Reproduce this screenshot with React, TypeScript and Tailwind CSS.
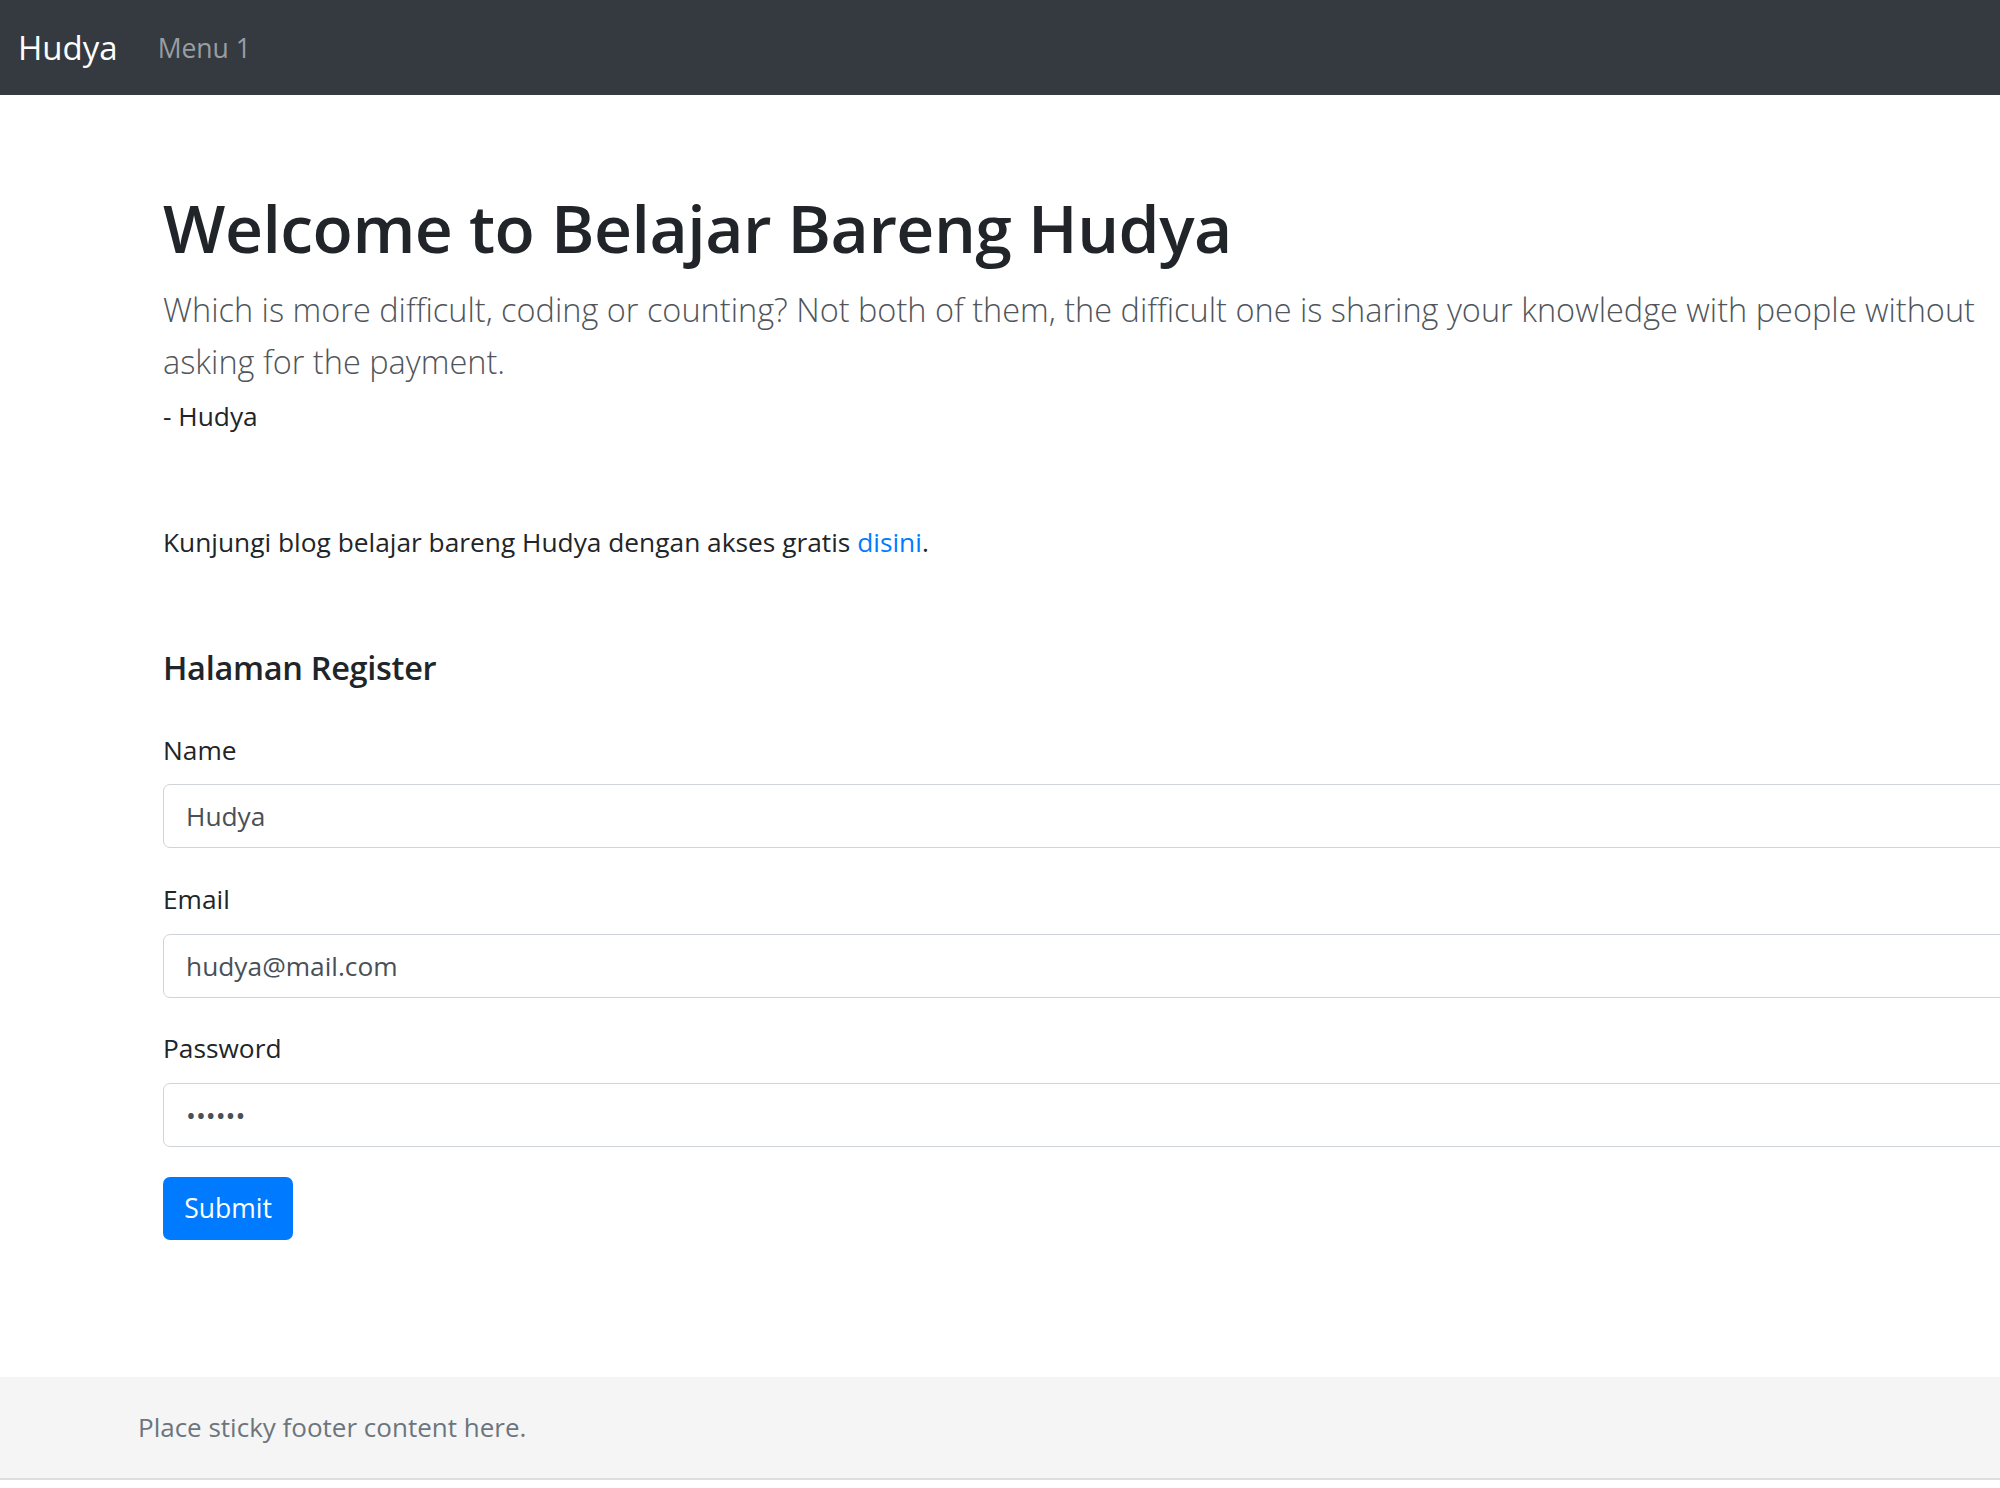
import React from "react";

export default function App() {
  return (
    <div
      className="w-[2000px] h-[1488px] overflow-hidden flex flex-col bg-white text-[#212529]"
      style={{ fontFamily: '"Open Sans", "Noto Sans", sans-serif' }}
    >
      <nav className="h-[95px] shrink-0 bg-[#343a40] flex items-center pl-[18px]">
        <span className="text-[33px] leading-none text-white mr-[40px]">Hudya</span>
        <span className="mt-[2px] text-[26.5px] leading-none text-[#9a9da0]">Menu 1</span>
      </nav>

      <main className="flex-1 pl-[163px]">
        <div className="w-[1880px]">
          <h1 className="mt-[92px] text-[66px] leading-[80px] font-semibold tracking-[-0.5px]">
            Welcome to Belajar Bareng Hudya
          </h1>
          <p className="mt-[17px] text-[32.5px] leading-[52px] font-light text-[#50555b]">
            Which is more difficult, coding or counting? Not both of them, the difficult one is sharing your knowledge with people without asking for the payment.
          </p>
          <p className="mt-[8px] text-[26.3px] leading-[40px]">- Hudya</p>

          <p className="mt-[86px] text-[26.3px] leading-[40px]">
            Kunjungi blog belajar bareng Hudya dengan akses gratis{" "}
            <a href="#" className="text-[#007bff]">disini</a>.
          </p>

          <h5 className="mt-[86px] text-[32.5px] leading-[40px] font-semibold tracking-[-0.3px]">Halaman Register</h5>

          <form className="mt-[42px] flex flex-col" onSubmit={(e) => e.preventDefault()}>
            <label className="text-[26.3px] leading-[40px]">Name</label>
            <input
              readOnly
              value="Hudya"
              className="mt-[14px] h-[64px] w-full rounded-[7px] border border-[#ced4da] px-[22px] text-[26.3px] text-[#495057] outline-none"
            />
            <label className="mt-[31px] text-[26.3px] leading-[40px]">Email</label>
            <input
              readOnly
              value="hudya@mail.com"
              className="mt-[15px] h-[64px] w-full rounded-[7px] border border-[#ced4da] px-[22px] text-[26.3px] text-[#495057] outline-none"
            />
            <label className="mt-[30px] text-[26.3px] leading-[40px]">Password</label>
            <input
              readOnly
              type="password"
              value="123456"
              className="mt-[15px] h-[64px] w-full rounded-[7px] border border-[#ced4da] px-[22px] text-[26.3px] text-[#495057] outline-none"
            />
            <div className="mt-[30px]">
              <button
                type="submit"
                className="h-[63px] w-[130px] rounded-[7px] bg-[#007bff] text-[26.5px] text-white"
              >
                Submit
              </button>
            </div>
          </form>
        </div>
      </main>

      <footer className="h-[103px] shrink-0 bg-[#f5f5f5] border-b-2 border-[#dedede] flex items-center pl-[138px]">
        <span className="text-[26px] text-[#6c757d]">Place sticky footer content here.</span>
      </footer>
      <div className="h-[8px] shrink-0 bg-white" />
    </div>
  );
}
